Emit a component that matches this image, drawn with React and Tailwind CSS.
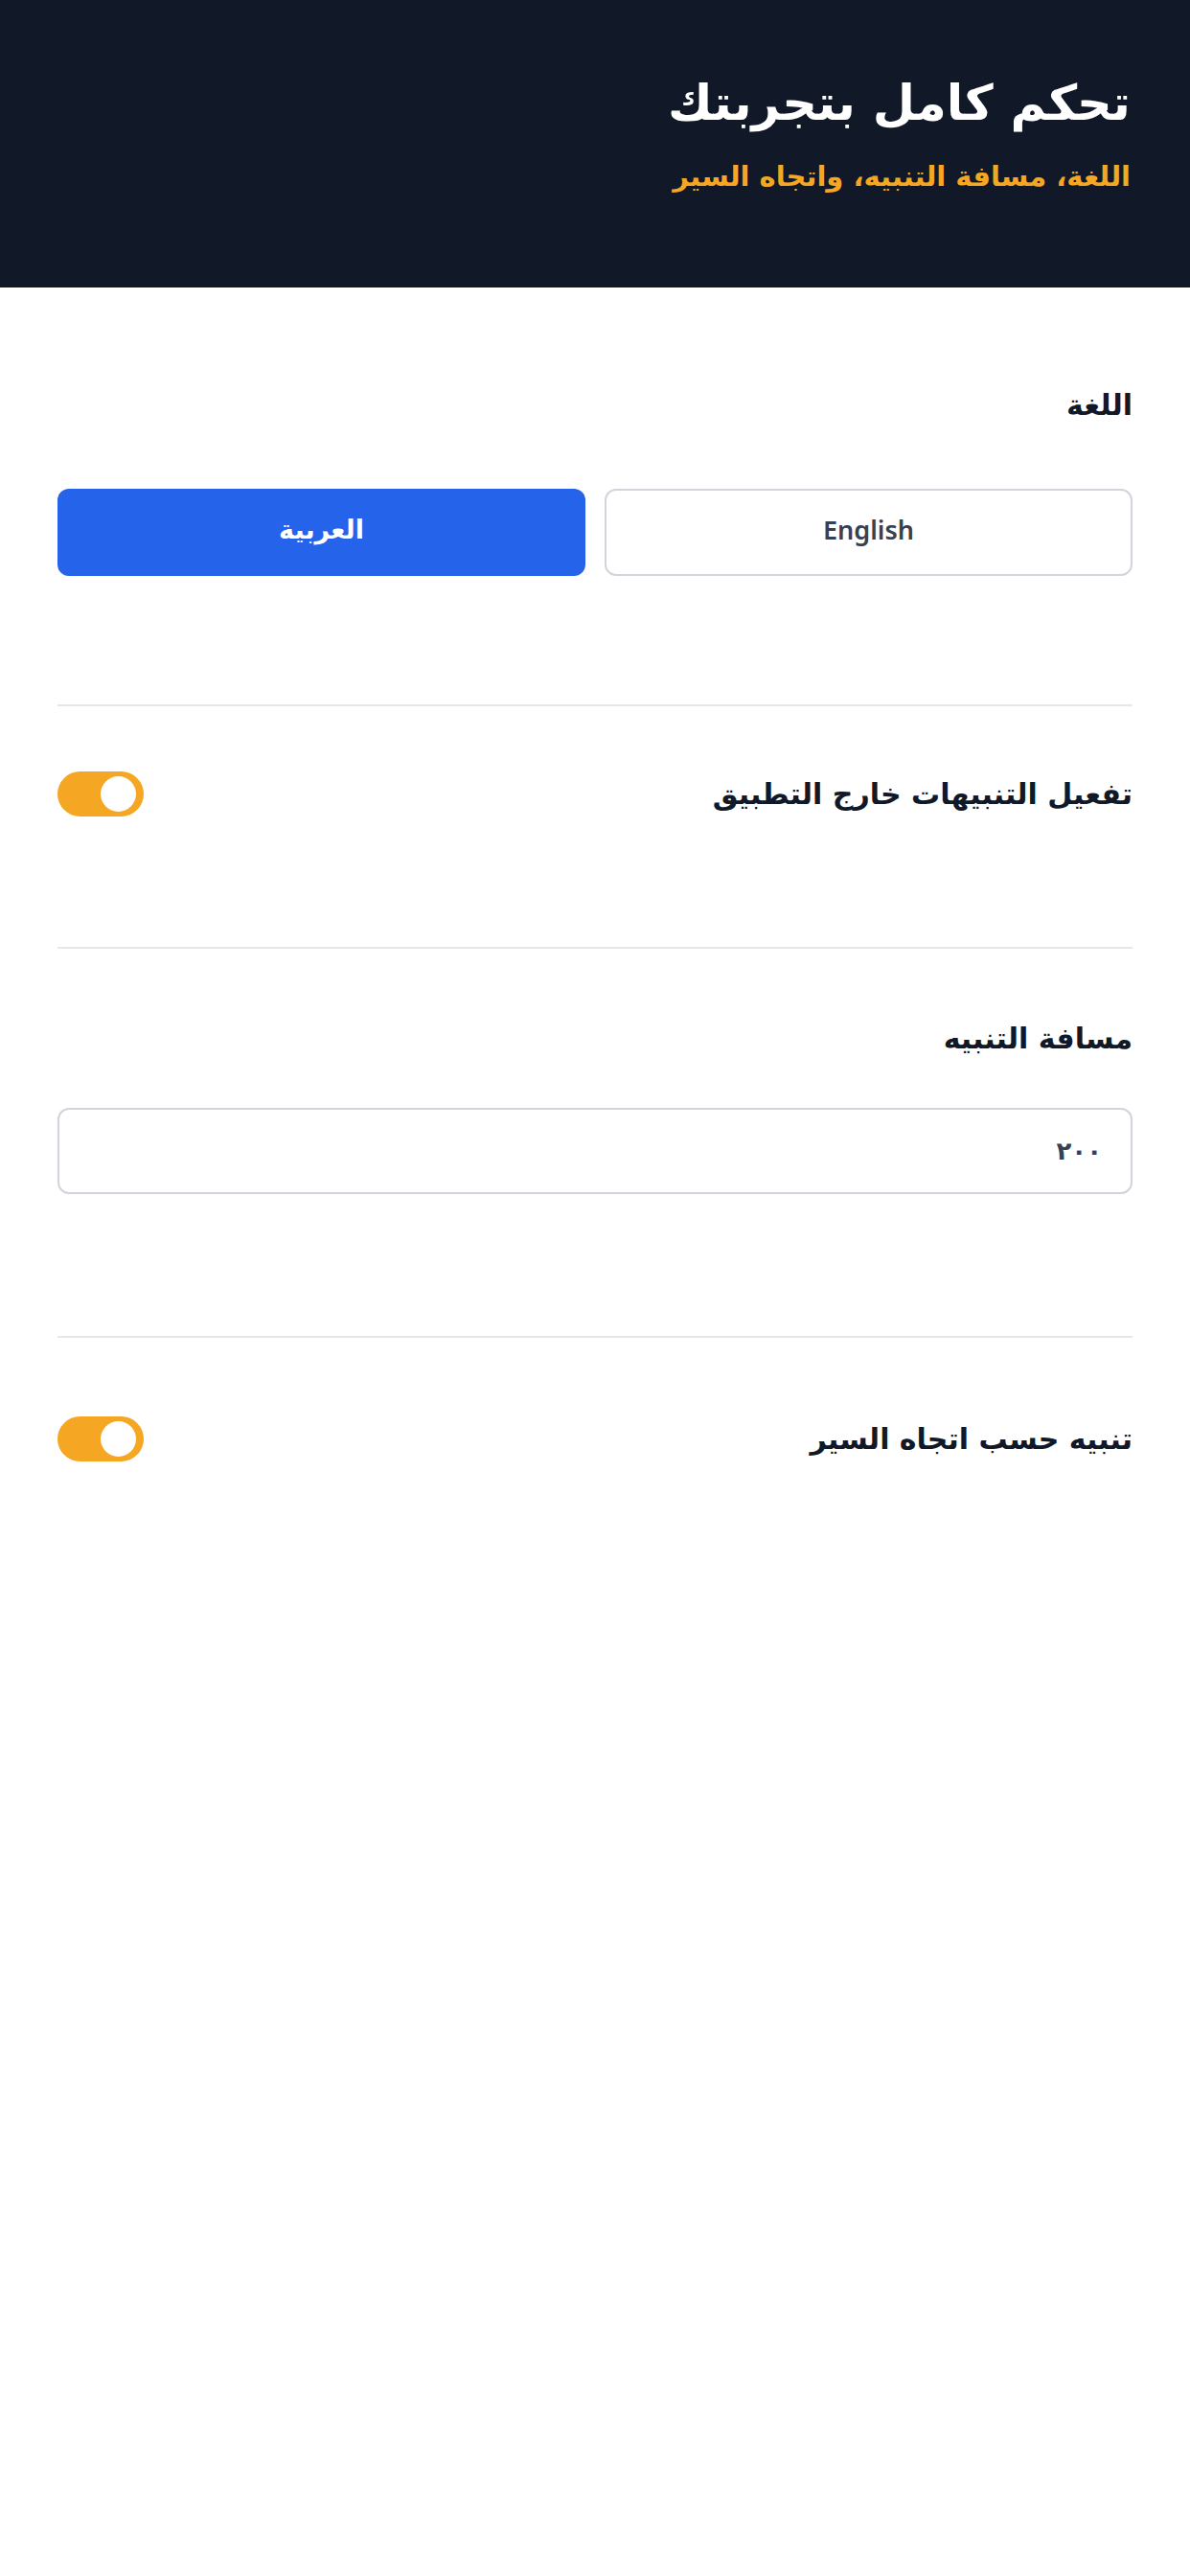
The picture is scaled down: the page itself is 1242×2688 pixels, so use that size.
import React from "react";

const ar = { fontFamily: '"DejaVu Sans", sans-serif' };
const en = { fontFamily: '"Noto Sans", "Open Sans", sans-serif' };

function Toggle() {
  return (
    <div className="relative w-[90px] h-[47px] rounded-full bg-[#f5a623] shrink-0" dir="ltr">
      <div className="absolute right-[8px] top-[5px] w-[37px] h-[37px] rounded-full bg-white" />
    </div>
  );
}

export default function App() {
  return (
    <div dir="rtl" className="w-[1242px] min-h-[2688px] bg-white" style={ar}>
      <header className="h-[300px] bg-[#111827] px-[62px] pt-[74px]">
        <h1 className="text-white text-[51px] font-bold leading-[68px]">تحكم كامل بتجربتك</h1>
        <p className="mt-[22px] text-[#f5a623] text-[29px] font-bold leading-[40px]">اللغة، مسافة التنبيه، واتجاه السير</p>
      </header>

      <section className="px-[60px] pt-[100px] pb-[134px]">
        <div className="h-[46px] leading-[46px] text-[30px] font-bold text-[#111827]">اللغة</div>
        <div className="mt-[64px] grid grid-cols-2 gap-[20px]">
          <button className="h-[91px] rounded-[12px] border-2 border-[#d1d5db] bg-white text-[#374151] text-[27px] font-semibold pb-[4px]" style={en}>English</button>
          <button className="h-[91px] rounded-[12px] bg-[#2563eb] text-white text-[27px] font-bold pb-[4px]" style={ar}>العربية</button>
        </div>
      </section>
      <div className="mx-[60px] h-[2px] bg-[#e5e7eb]" />

      <section className="px-[60px] pt-[68px] pb-[136px]">
        <div className="flex items-center justify-between h-[47px]">
          <span className="text-[30px] font-bold text-[#111827]">تفعيل التنبيهات خارج التطبيق</span>
          <Toggle />
        </div>
      </section>
      <div className="mx-[60px] h-[2px] bg-[#e5e7eb]" />

      <section className="px-[60px] pt-[72px] pb-[148px]">
        <div className="h-[44px] leading-[44px] text-[30px] font-bold text-[#111827]">مسافة التنبيه</div>
        <div className="mt-[50px] h-[90px] rounded-[12px] border-2 border-[#d1d5db] flex items-center pr-[30px] pl-[30px] text-[26px] text-[#374151] font-bold">
          ٢٠٠
        </div>
      </section>
      <div className="mx-[60px] h-[2px] bg-[#e5e7eb]" />

      <section className="px-[60px] pt-[82px]">
        <div className="flex items-center justify-between h-[47px]">
          <span className="text-[30px] font-bold text-[#111827]">تنبيه حسب اتجاه السير</span>
          <Toggle />
        </div>
      </section>
    </div>
  );
}
